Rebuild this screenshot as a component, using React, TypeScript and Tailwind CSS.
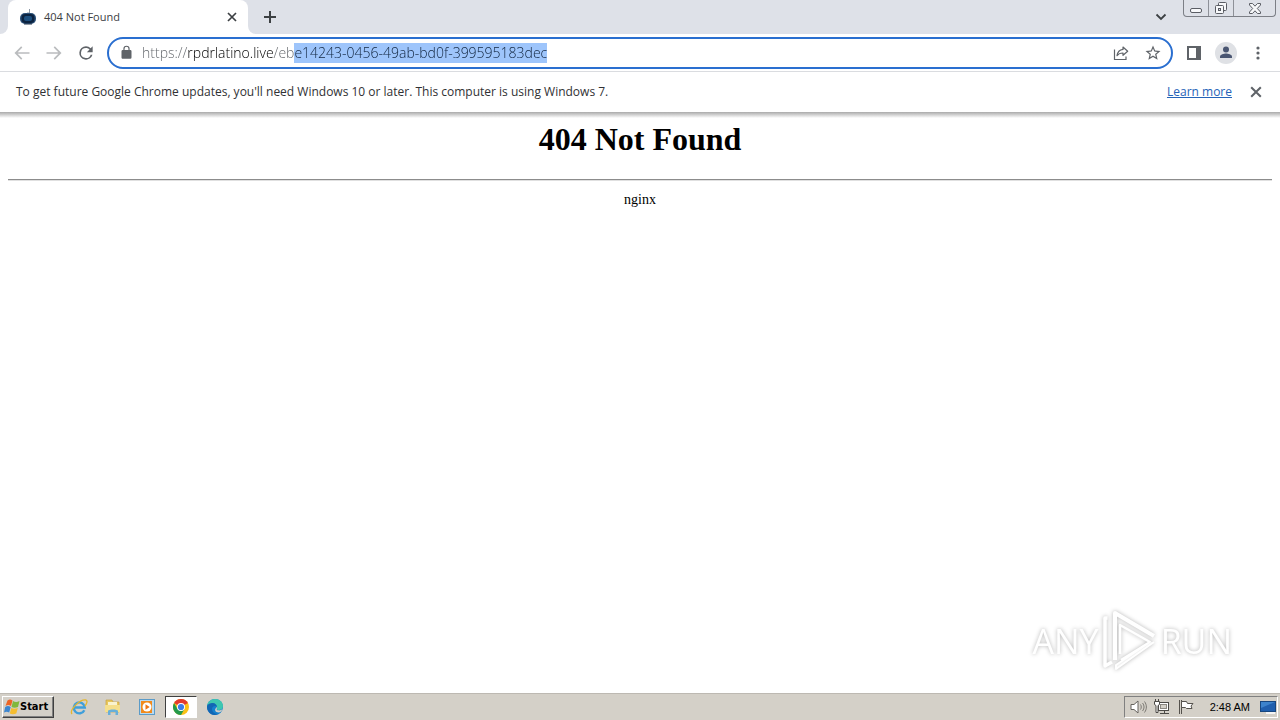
import type { ReactNode } from "react";

const iconButton = "flex shrink-0 items-center justify-center";

function RobotIcon() {
  return (
    <svg width="16" height="16" viewBox="0 0 16 16" aria-hidden="true">
      <path d="M9.500 5V0M8 5V3" stroke="#8b97a5" strokeWidth="1" />
      <rect x="0" y="4" width="16" height="11" rx="5" fill="#2b5078" />
      <rect x="1.500" y="5" width="13" height="9" rx="4" fill="#0c2340" />
      <rect x="4" y="7" width="8" height="5" rx="2" fill="#1d5080" />
      <path d="M4 15h8" stroke="#24354b" />
    </svg>
  );
}

function Cross({ size, color, width }: { size: number; color: string; width: number }) {
  return (
    <svg width={size} height={size} viewBox="0 0 10 10" aria-hidden="true">
      <path d="M1 1l8 8M9 1L1 9" stroke={color} strokeWidth={width} />
    </svg>
  );
}

function TabStrip() {
  return (
    <header className="flex h-[34px] items-stretch bg-[#dee1e8]">
      <div className="flex w-2 items-end bg-white">
        <div className="h-full w-2 rounded-br-lg bg-[#dee1e8]" />
      </div>
      <div className="flex w-60 items-center rounded-t-lg bg-white pr-[11px] pl-3">
        <RobotIcon />
        <span className="ml-2 grow font-['Open_Sans','Noto_Sans',sans-serif] text-[11px] text-[#3c4043]">404 Not Found</span>
        <button aria-label="Close tab" className={`${iconButton} w-[10px]`}>
          <Cross size={10} color="#3c4043" width={1.7} />
        </button>
      </div>
      <div className="flex w-2 items-end bg-white">
        <div className="h-full w-2 rounded-bl-lg bg-[#dee1e8]" />
      </div>
      <button aria-label="New tab" className={`${iconButton} w-7`}>
        <svg width="12" height="12" viewBox="0 0 12 12" aria-hidden="true">
          <path d="M6 0v12M0 6h12" stroke="#3c4043" strokeWidth="2" />
        </svg>
      </button>
      <div className="grow" />
      <button aria-label="Search tabs" className={`${iconButton} mr-4 w-3`}>
        <svg width="12" height="8" viewBox="0 0 12 8" aria-hidden="true">
          <path d="M1.500 1.500L6 6l4.500-4.500" fill="none" stroke="#3c4043" strokeWidth="1.800" />
        </svg>
      </button>
      <div className="mr-1 flex h-[17px] rounded-b border border-t-0 border-[#7c7f86] text-[#5a5d64]">
        <button aria-label="Minimize" className={`${iconButton} w-[25px] border-r border-[#8e9198]`}>
          <svg width="14" height="16" viewBox="0 0 14 16" aria-hidden="true">
            <rect x="1.500" y="8.500" width="11" height="4" rx="1.500" fill="#f7f8fa" stroke="currentColor" />
          </svg>
        </button>
        <button aria-label="Restore" className={`${iconButton} w-[25px] border-r border-[#8e9198]`}>
          <svg width="14" height="16" viewBox="0 0 14 16" aria-hidden="true">
            <rect x="4.500" y="2.500" width="8" height="8" rx="1" fill="#f7f8fa" stroke="currentColor" />
            <rect x="1.500" y="5.500" width="8" height="8" rx="1" fill="#f7f8fa" stroke="currentColor" />
            <rect x="4.500" y="8.500" width="2" height="2" fill="#dee1e8" stroke="currentColor" />
          </svg>
        </button>
        <button aria-label="Close window" className={`${iconButton} w-[41px]`}>
          <svg width="14" height="14" viewBox="0 0 14 14" aria-hidden="true">
            <path
              d="M1.500 2.500h3L7 5.200l2.500-2.700h3v1.500L9.300 7.500l3.200 3.500v1.500h-3L7 9.800l-2.500 2.700h-3V11l3.200-3.500L1.500 4z"
              fill="#f7f8fa"
              stroke="currentColor"
            />
          </svg>
        </button>
      </div>
    </header>
  );
}

function Material({ path, size, color }: { path: string; size: number; color: string }) {
  return (
    <svg width={size} height={size} viewBox="0 0 24 24" fill={color} aria-hidden="true">
      <path d={path} />
    </svg>
  );
}

function AddressBar() {
  return (
    <form className="flex h-8 min-w-0 grow items-center rounded-full border-2 border-[#2a6fd0] bg-white pr-2 pl-[10px]">
      <Material
        size={15}
        color="#5f6368"
        path="M18 8h-1V6A5 5 0 0 0 7 6v2H6a2 2 0 0 0-2 2v10c0 1.100.9 2 2 2h12a2 2 0 0 0 2-2V10a2 2 0 0 0-2-2zM8.900 6a3.100 3.100 0 0 1 6.200 0v2H8.900z"
      />
      <div className="ml-2 flex min-w-0 grow items-center bg-[linear-gradient(90deg,transparent_152px,#9ec5fb_152px,#9ec5fb_405px,transparent_405px)]">
        <input
          type="text"
          aria-label="Address and search bar"
          defaultValue="https://rpdrlatino.live/ebe14243-0456-49ab-bd0f-399595183dec"
          className="h-5 w-full min-w-0 bg-[linear-gradient(90deg,#5f6368_45px,#000000_45px,#000000_132px,#5f6368_132px,#5f6368_152px,#10243e_152px)] bg-clip-text p-0 font-['Open_Sans','Noto_Sans',sans-serif] text-sm font-light text-transparent outline-none"
        />
      </div>
      <button type="button" aria-label="Share this page" className={`${iconButton} size-8`}>
        <svg width="16" height="16" viewBox="0 0 16 16" fill="none" stroke="#5f6368" strokeWidth="1.200" aria-hidden="true">
          <path d="M1.500 4.500v10h11.500v-3" />
          <path d="M10 2l4.700 4.200L10 10.300V8C7.200 8 5.400 8.800 4 10.700 4.500 7.300 6.500 4.900 10 4.400z" strokeLinejoin="round" />
        </svg>
      </button>
      <button type="button" aria-label="Bookmark this tab" className={`${iconButton} -mr-[6px] size-8`}>
        <Material
          size={18}
          color="#5f6368"
          path="M22 9.240l-7.190-.62L12 2 9.190 8.630 2 9.240l5.460 4.730L5.820 21 12 17.270 18.180 21l-1.630-7.030zM12 15.400l-3.760 2.270 1-4.280-3.320-2.880 4.380-.38L12 6.100l1.710 4.040 4.380.38-3.320 2.880 1 4.280z"
        />
      </button>
    </form>
  );
}

function Toolbar() {
  return (
    <nav aria-label="Browser toolbar" className="flex h-[38px] items-center border-b border-[#dadce0] bg-white px-[6px]">
      <button aria-label="Back" className={`${iconButton} size-8`}>
        <Material size={20} color="#babcbe" path="M21 11H6.830l5.590-5.590L11 4l-8 8 8 8 1.410-1.410L6.830 13H21z" />
      </button>
      <button aria-label="Forward" className={`${iconButton} size-8`}>
        <Material size={20} color="#babcbe" path="M3 11h14.170l-5.580-5.590L13 4l8 8-8 8-1.410-1.410L17.170 13H3z" />
      </button>
      <button aria-label="Reload" className={`${iconButton} size-8`}>
        <Material
          size={20}
          color="#5f6368"
          path="M17.650 6.350A7.960 7.960 0 0 0 12 4a8 8 0 1 0 7.730 10h-2.080A6 6 0 1 1 12 6c1.660 0 3.140.69 4.220 1.780L13 11h7V4z"
        />
      </button>
      <div className="ml-[5px] flex min-w-0 grow">
        <AddressBar />
      </div>
      <button aria-label="Side panel" className={`${iconButton} ml-[5px] size-8`}>
        <svg width="14" height="14" viewBox="0 0 14 14" aria-hidden="true">
          <path d="M0 0h14v14H0zM2 2v10h7V2z" fill="#5f6368" fillRule="evenodd" />
        </svg>
      </button>
      <button aria-label="Profile" className={`${iconButton} size-8`}>
        <svg width="22" height="22" viewBox="0 0 22 22" aria-hidden="true">
          <circle cx="11" cy="11" r="11" fill="#dfe1e5" />
          <circle cx="11" cy="7.500" r="3" fill="#4a5672" />
          <path d="M5 16v-1.500c0-2 4-3 6-3s6 1 6 3V16z" fill="#4a5672" />
        </svg>
      </button>
      <button aria-label="Chrome menu" className={`${iconButton} size-8`}>
        <svg width="4" height="14" viewBox="0 0 4 14" fill="#5f6368" aria-hidden="true">
          <circle cx="2" cy="2" r="1.600" />
          <circle cx="2" cy="7" r="1.600" />
          <circle cx="2" cy="12" r="1.600" />
        </svg>
      </button>
    </nav>
  );
}

function InfoBar() {
  return (
    <div role="status" className="flex h-10 shrink-0 items-center bg-white pr-[18px] pl-4 font-['Open_Sans','Noto_Sans',sans-serif] text-xs text-[#303134]">
      <p className="grow">
        To get future Google Chrome updates, you&apos;ll need Windows 10 or later. This computer is using Windows 7.
      </p>
      <a href="#learn-more" className="text-[#2463b8] underline">
        Learn more
      </a>
      <button aria-label="Dismiss" className={`${iconButton} ml-[18px] size-3`}>
        <Cross size={12} color="#5f6368" width={1.7} />
      </button>
    </div>
  );
}

function Watermark() {
  return (
    <div className="absolute right-12 bottom-5 flex items-center font-['Open_Sans','Noto_Sans',sans-serif] text-[34px] leading-none text-white drop-shadow-[0_0_2px_#b4b4b4]">
      <span>ANY</span>
      <svg width="58" height="64" viewBox="8 3 58 64" fill="none" stroke="#fff" strokeLinejoin="round" className="mx-[2px]" aria-hidden="true">
        <path d="M14.500 12H12v48l7-4" strokeWidth="3.500" />
        <path d="M22 54V7l39 23" strokeWidth="4" />
        <path d="M27 48V19l30 17-29 18" strokeWidth="2.500" />
        <path d="M61 36L23 63v-4l34-23" fill="#f3f3f3" strokeWidth="2" />
      </svg>
      <span>RUN</span>
    </div>
  );
}

function ExplorerIcon() {
  return (
    <svg width="18" height="18" viewBox="0 0 18 18" fill="none" aria-hidden="true">
      <path d="M14.300 12.200A5.500 5.500 0 1 1 14.800 9.500H5" stroke="#3f9fda" strokeWidth="2.400" />
      <path d="M2 16C-1 12 10 1 16 2c2 1 .5 4-1 6" stroke="#e5b62e" strokeWidth="1.300" />
    </svg>
  );
}

function FolderIcon() {
  return (
    <svg width="18" height="18" viewBox="0 0 18 18" aria-hidden="true">
      <path d="M2 2h6l1 2h6v10H2z" fill="#e8c75b" stroke="#c9a544" strokeWidth=".7" />
      <path d="M4 4h9v5H4z" fill="#f9f3cf" />
      <path d="M1 7h15v7H1z" fill="#f5df8c" />
      <path d="M4 17v-4c0-2 10-2 10 0v4h-2.500v-3h-5v3z" fill="#68afd9" />
    </svg>
  );
}

function PlayerIcon() {
  return (
    <svg width="16" height="16" viewBox="0 0 16 16" aria-hidden="true">
      <rect x=".5" y=".5" width="15" height="15" fill="#b9daf1" stroke="#5b9bc8" />
      <rect x="2" y="2" width="11" height="12" fill="#f18a1c" />
      <circle cx="8" cy="8" r="4.500" fill="#fff" />
      <path d="M6.500 5.300l4.200 2.700-4.200 2.700z" fill="#ed7514" />
    </svg>
  );
}

function ChromeIcon() {
  return (
    <svg width="16" height="16" viewBox="0 0 16 16" aria-hidden="true">
      <circle cx="8" cy="8" r="8" fill="#fbc116" />
      <path d="M8 8L1.070 4A8 8 0 0 1 14.930 4z" fill="#e33b2e" />
      <path d="M1.070 4A8 8 0 0 0 8 16l3.500-6H4.500z" fill="#249a4c" />
      <circle cx="8" cy="8" r="4" fill="#fff" />
      <circle cx="8" cy="8" r="3.100" fill="#3b7de8" />
    </svg>
  );
}

function EdgeIcon() {
  return (
    <svg width="16" height="16" viewBox="0 0 16 16" aria-hidden="true">
      <circle cx="8" cy="8" r="8" fill="#1580ce" />
      <path d="M0 8C0 3 4 0 8 0c5 0 8 3.500 8 7 0 3-2.500 4.500-5 4-2-.3-1-1-1-3C10 5 3 3 0 8z" fill="#3ec7b0" />
      <path d="M0 8c0-3 3-4 6-4 2 0 4 2 4 4-1-2-5-1-5 2 0 3 3 5 6 5C5 18 0 13 0 8z" fill="#1266b4" />
      <path d="M10 8c0 2-1 3 1 3.300 2 .4 3.500-.3 4.500-1.300-.5 1.800-2 3.500-4 3.500-3 0-5-3-1.500-5.500z" fill="#d4d0c8" />
    </svg>
  );
}

function TaskButton({ label, active = false, children }: { label: string; active?: boolean; children: ReactNode }) {
  return (
    <button
      aria-label={label}
      className={
        active
          ? "flex h-[22px] w-8 items-center justify-center border border-t-[#404040] border-r-white border-b-white border-l-[#404040] bg-white"
          : "flex h-[22px] w-8 items-center justify-center"
      }
    >
      {children}
    </button>
  );
}

function Taskbar() {
  return (
    <footer className="flex h-[27px] shrink-0 items-center border-t border-[#bdb9b2] bg-[#d4d0c8] px-[2px]">
      <button className="flex h-[22px] w-[52px] items-center border border-t-white border-r-[#404040] border-b-[#404040] border-l-white px-px font-['DejaVu_Sans_Condensed','DejaVu_Sans',sans-serif] text-[11px] font-bold text-black shadow-[inset_-1px_-1px_#808080]">
        <svg width="16" height="16" viewBox="0 0 16 16" className="shrink-0" aria-hidden="true">
          <path d="M3.500 1.500c2-1.300 3-1.300 5 0L7 7c-2-1.200-3.500-1.200-5.500 0z" fill="#ed6525" />
          <path d="M9 2c2 1.200 4 1.200 6.500 0L14 8c-2.500 1-4.500 1-6.500 0z" fill="#80b83c" />
          <path d="M1.200 8c2-1.200 3.500-1.200 5.500 0l-1.500 5.500c-2-1-3.200-1-5.200 0z" fill="#3c86d0" />
          <path d="M7.300 9c2 1 4 1 6.500 0l-1.500 5.500c-2.500 1-4.500 1-6.500 0z" fill="#f4bd30" />
        </svg>
        Start
      </button>
      <div className="ml-[9px] flex grow items-center gap-[2px]">
        <TaskButton label="Internet Explorer">
          <ExplorerIcon />
        </TaskButton>
        <TaskButton label="Windows Explorer">
          <FolderIcon />
        </TaskButton>
        <TaskButton label="Media Player">
          <PlayerIcon />
        </TaskButton>
        <TaskButton label="Google Chrome" active>
          <ChromeIcon />
        </TaskButton>
        <TaskButton label="Microsoft Edge">
          <EdgeIcon />
        </TaskButton>
      </div>
      <div className="flex h-[22px] items-center border border-t-[#808080] border-r-white border-b-white border-l-[#808080] pl-[5px]">
        <svg width="17" height="16" viewBox="0 0 17 16" fill="none" stroke="#66635e" aria-hidden="true">
          <path d="M1 5.500h3L8 2v12l-4-3.500H1z" fill="#fff" />
          <path d="M10.500 5.500c1 1.500 1 3.500 0 5M12.500 4c2 2.500 2 5.500 0 8M14.500 2.500c2.500 3.500 2.500 7.500 0 11" strokeWidth=".8" />
        </svg>
        <svg width="16" height="16" viewBox="0 0 16 16" fill="#fff" stroke="#4c4a47" className="ml-[7px]" aria-hidden="true">
          <rect x="4.500" y="3.500" width="10" height="8" />
          <rect x="6.500" y="5.500" width="6" height="4" fill="#d4d0c8" stroke="#8b8882" />
          <path d="M6 14.500h9M10.500 12v2M1.500 0v3M4.500 0v3" />
          <path d="M.5 2.500h5v3l-1.500 1v7h-2v-7l-1.500-1z" />
        </svg>
        <svg width="16" height="16" viewBox="0 0 16 16" fill="#fff" stroke="#55524d" className="ml-2" aria-hidden="true">
          <path d="M1.500 1v14M3.500 1v14" />
          <path d="M3.500 2.500h5l1 2h5.500L13 7l1 2.500H8.500l-1-1h-4z" />
        </svg>
        <time className="ml-4 font-['Liberation_Sans',sans-serif] text-[11px] text-black">2:48 AM</time>
        <button aria-label="Show desktop" className="ml-[10px] flex w-[17px] items-center">
          <svg width="16" height="16" viewBox="0 0 16 16" aria-hidden="true">
            <rect x=".5" y="2.500" width="15" height="10" fill="#205fae" stroke="#17467f" />
            <path d="M1 3h14L1 9z" fill="#3d83cc" />
            <path d="M6 14h9" stroke="#f4f4f4" strokeWidth="2" />
          </svg>
        </button>
      </div>
    </footer>
  );
}

export default function App() {
  return (
    <div className="flex min-h-screen flex-col bg-white font-['Noto_Sans',sans-serif]">
      <TabStrip />
      <Toolbar />
      <InfoBar />
      <div className="h-[6px] shrink-0 bg-linear-to-b from-[#aaaaaa] to-white" />
      <main className="relative grow px-2 pt-[3px] text-center font-['Liberation_Serif',serif] text-black">
        <h1 className="text-[32px] leading-[37px] font-bold">404 Not Found</h1>
        <hr className="mt-[21px] mb-[9px] border-t border-b border-t-[#8c8c8c] border-b-[#e0e0e0]" />
        <p className="text-sm leading-5">nginx</p>
        <Watermark />
      </main>
      <Taskbar />
    </div>
  );
}
